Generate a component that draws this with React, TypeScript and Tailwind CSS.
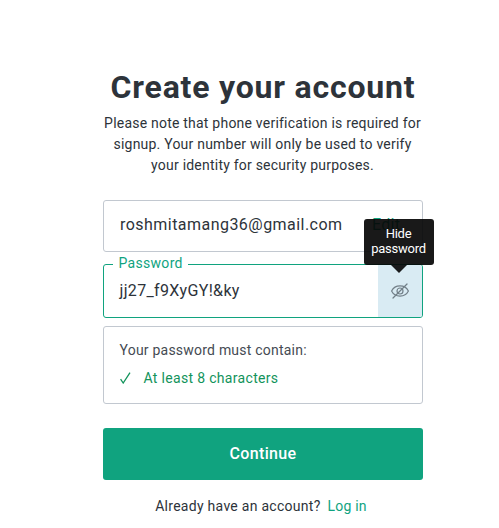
function EyeOffIcon() {
  return (
    <svg width="20" height="20" viewBox="0 0 20 20" fill="none" stroke="#727f88" strokeWidth="1.2" strokeLinecap="round">
      <path d="M1.6 10C5 3.2 15 3.2 18.4 10C15 16.8 5 16.8 1.6 10Z" />
      <circle cx="10" cy="10" r="3" />
      <path d="M3 17L17 3" />
    </svg>
  );
}

function Tooltip() {
  return (
    <div className="absolute top-[-46px] left-[-14px] z-10 h-[46px] w-[70px] rounded-[3px] bg-[#050505]/92 pt-[7px] pr-px text-center text-[13px] leading-[15px] tracking-[-0.25px] text-white">
      Hide
      <br />
      password
      <span className="absolute top-[46px] left-[27px] h-2 w-4 bg-[#191a1b] [clip-path:polygon(0_0,100%_0,50%_100%)]" />
    </div>
  );
}

export default function App() {
  return (
    <main className="flex h-[528px] w-[499px] flex-col overflow-hidden bg-white pt-[67px] pl-[103px] font-['Roboto','Liberation_Sans',sans-serif] text-[#2d333a]">
      <div className="w-80">
        <h1 className="flex h-10 items-center justify-center text-[32px] leading-10 font-bold tracking-[0.8px] whitespace-nowrap">
          Create your account
        </h1>
        <p className="mt-1.5 -ml-px text-center text-[14px] leading-[21px] tracking-[0.22px] whitespace-nowrap">
          Please note that phone verification is required for
          <br />
          signup. Your number will only be used to verify
          <br />
          your identity for security purposes.
        </p>

        <div className="mt-6 flex h-[52px] items-center rounded-[3px] border border-[#c2c8d0] pb-[3px] pl-4 text-[16px] leading-6">
          <span className="w-[252px] tracking-[0.46px]">roshmitamang36@gmail.com</span>
          <span className="tracking-[0.3px] text-[#10a37f]">Edit</span>
        </div>

        <div className="relative mt-3 flex h-[54px] rounded-[3px] border border-[#10a37f]">
          <span className="absolute top-[-12px] left-[9px] bg-white px-[5.5px] text-[14px] leading-5 tracking-[0.3px] text-[#10a37f]">
            Password
          </span>
          <span className="flex-1 pt-[14px] pl-[15.5px] text-[16px] leading-6 tracking-[0.35px]">jj27_f9XyGY!&amp;ky</span>
          <button className="relative flex w-11 items-center justify-center rounded-r-[2px] bg-[#d9ebf3]" aria-label="Hide password">
            <EyeOffIcon />
            <Tooltip />
          </button>
        </div>

        <div className="mt-2 h-[78px] rounded-[3px] border border-[#c2c8d0] pt-[13px] pl-[15.5px] text-[14px] leading-5">
          <p className="tracking-[0.22px] text-[#454b53]">Your password must contain:</p>
          <p className="mt-2 flex items-center text-[#12935b]">
            <svg className="mr-3 h-3 w-3" viewBox="0 0 12 12" fill="none" stroke="currentColor" strokeWidth="1.3">
              <path d="M0.6 7.2L3.2 11L10 0.6" />
            </svg>
            <span className="tracking-[0.32px]">At least 8 characters</span>
          </p>
        </div>

        <button className="mt-6 flex h-[52px] w-full items-center justify-center rounded-[3px] bg-[#10a37f] pb-px text-[16px] font-medium tracking-[0.35px] text-white">
          Continue
        </button>

        <p className="mt-4 -ml-1 flex justify-center gap-[7px] text-[14px] leading-5 whitespace-nowrap">
          <span className="tracking-[0.28px]">Already have an account?</span>
          <a className="tracking-[0.2px] text-[#10a37f]">Log in</a>
        </p>
      </div>
    </main>
  );
}
